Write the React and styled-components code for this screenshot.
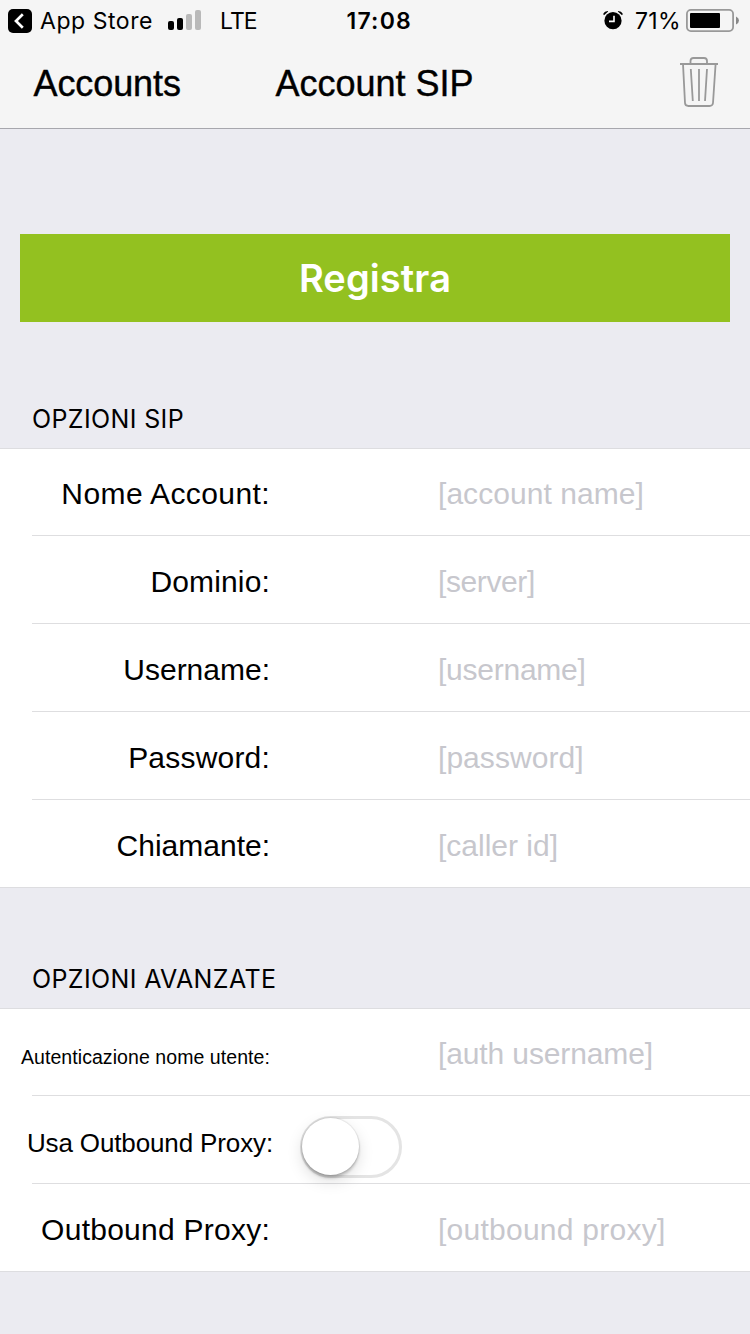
import React, { useState } from "react";
import styled, { createGlobalStyle } from "styled-components";

const GlobalStyle = createGlobalStyle`
  * {
    box-sizing: border-box;
  }

  body {
    margin: 0;
    background: #ebebf1;
    font-family: "Liberation Sans", Arial, sans-serif;
    color: #000;
  }
`;

const Screen = styled.div`
  width: 750px;
  height: 1334px;
  overflow: hidden;
  background: #ebebf1;
`;

const Header = styled.header`
  height: 129px;
  background: #f5f5f5;
  border-bottom: 1px solid #a7a7ad;
`;

const StatusBar = styled.div`
  display: flex;
  align-items: center;
  height: 40px;
  padding: 1px 11px 0 8px;
  font-family: Inter, sans-serif;
  font-size: 23px;
  line-height: 40px;

  svg {
    flex: none;
  }
`;

const StatusText = styled.span`
  width: ${props => props.width}px;
  margin-left: ${props => props.gap}px;
  font-weight: ${props => props.weight || 400};
  letter-spacing: ${props => props.spacing || 0}px;
  white-space: nowrap;
`;

const SignalIcon = styled.svg`
  margin: -2px 0 0 14px;
`;

const AlarmIcon = styled.svg`
  margin: -2px 0 0 auto;
`;

const BatteryIcon = styled.svg`
  margin-left: 6px;
`;

const NavBar = styled.nav`
  display: grid;
  grid-template-columns: 242px 1fr 40px;
  align-items: center;
  height: 88px;
  padding: 0 31px 0 33.5px;
`;

const BackButton = styled.button`
  padding: 0;
  border: 0;
  background: none;
  color: #000;
  font: 36px "Liberation Sans", Arial, sans-serif;
  letter-spacing: -0.1px;
  text-align: left;
  -webkit-text-stroke: 0.4px #000;
`;

const Title = styled.h1`
  margin: 0;
  font-size: 36px;
  font-weight: 400;
  -webkit-text-stroke: 0.4px #000;
`;

const TrashButton = styled.button`
  display: flex;
  padding: 0;
  margin-top: -5px;
  border: 0;
  background: none;
`;

const RegisterButton = styled.button`
  display: block;
  width: 710px;
  height: 88px;
  margin: 105px 20px 0;
  padding: 0;
  border: 0;
  background: #93c120;
  color: #fff;
  font: 600 38px Inter, sans-serif;
  letter-spacing: 0.1px;
`;

const SectionTitle = styled.h2`
  display: flex;
  align-items: flex-end;
  height: ${props => props.height}px;
  margin: 0;
  padding: 0 0 13px 32px;
  font: 400 25px/32px Inter, sans-serif;
  letter-spacing: 0.37px;
`;

const Group = styled.div`
  background: #fff;
  border-top: 1px solid #dddde0;
  border-bottom: 1px solid #dddde0;
`;

const Row = styled.div`
  display: flex;
  align-items: center;
  height: 88px;
  padding-top: 3px;
  background: linear-gradient(#dedee0, #dedee0) 32px 100% / 718px 1px no-repeat;

  &:first-child {
    height: 87px;
  }

  &:last-child {
    height: 87px;
    padding-top: 4px;
    background: none;
  }
`;

const Label = styled.label`
  width: ${props => props.width || 270}px;
  padding-top: ${props => props.drop || 0}px;
  font-size: ${props => props.size || 30}px;
  letter-spacing: ${props => props.spacing || 0}px;
  text-align: right;
  white-space: nowrap;
`;

const Field = styled.input`
  width: 300px;
  height: 60px;
  margin-left: 168px;
  padding: 0;
  border: 0;
  outline: 0;
  background: none;
  font: 30px "Liberation Sans", Arial, sans-serif;
  letter-spacing: ${props => props.$spacing || 0}px;

  &::placeholder {
    color: #c7c7cd;
    opacity: 1;
  }
`;

const Switch = styled.button`
  display: flex;
  align-items: center;
  justify-content: ${props => (props.$on ? "flex-end" : "flex-start")};
  width: 102px;
  height: 62px;
  margin: 11px 0 0 27px;
  padding: 0;
  border: 3px solid #e4e4e4;
  border-radius: 31px;
  background: ${props => (props.$on ? "#4cd964" : "#fff")};
`;

const Thumb = styled.span`
  width: 57px;
  height: 57px;
  margin: -1px 0 0 -1px;
  border-radius: 50%;
  background: #fff;
  box-shadow: 0 6px 16px rgba(0, 0, 0, 0.13), 0 3px 3px rgba(0, 0, 0, 0.2),
    0 0 1px 1px rgba(0, 0, 0, 0.08);
`;

const sipFields = [
  { id: "name", label: "Nome Account:", placeholder: "[account name]", labelSpacing: 0.4, spacing: 0.05 },
  { id: "domain", label: "Dominio:", placeholder: "[server]", labelSpacing: 0.15, spacing: -0.4 },
  { id: "username", label: "Username:", placeholder: "[username]", spacing: -0.25 },
  { id: "password", label: "Password:", placeholder: "[password]", labelSpacing: 0.2, spacing: 0.05 },
  { id: "caller", label: "Chiamante:", placeholder: "[caller id]" },
];

function Status() {
  return (
    <StatusBar>
      <svg width="24" height="24" viewBox="0 0 24 24">
        <rect width="24" height="24" rx="5" />
        <path d="M14.8 5.3 L8 12 L14.8 18.7" fill="none" stroke="#fff" strokeWidth="2.7" />
      </svg>
      <StatusText gap={8} width={114} spacing={0.55}>App Store</StatusText>
      <SignalIcon width="34" height="20" viewBox="0 0 34 20">
        <rect x="0" y="11" width="6" height="9" rx="2" />
        <rect x="9" y="8" width="6" height="12" rx="2" />
        <rect x="18" y="4" width="6" height="16" rx="2" fill="#b9b9b9" />
        <rect x="27" y="0" width="6" height="20" rx="2" fill="#b9b9b9" />
      </SignalIcon>
      <StatusText gap={18} width={44} spacing={-0.9}>LTE</StatusText>
      <StatusText gap={82.5} width={69.5} weight={600} spacing={1.2}>17:08</StatusText>
      <AlarmIcon width="20" height="20" viewBox="0 0 20 20">
        <circle cx="10" cy="10.7" r="8.6" />
        <path d="M0.4 4.6 V3.5 Q1.5 1 4.8 1 L5.2 1.5 L1 5.2 Z M19.6 4.6 V3.5 Q18.5 1 15.2 1 L14.8 1.5 L19 5.2 Z" />
        <path d="M11 5.8 V11.4 H6" fill="none" stroke="#fff" strokeWidth="1.6" />
      </AlarmIcon>
      <StatusText gap={12} width={45} spacing={0.3}>71%</StatusText>
      <BatteryIcon width="53" height="24" viewBox="0 0 53 24">
        <rect x="0.9" y="0.9" width="46.2" height="21.2" rx="4" fill="none" stroke="#999" strokeWidth="1.8" />
        <rect x="4" y="4" width="30" height="15" rx="1" />
        <path d="M50 7.5 Q53 9 53 11.5 Q53 14 50 15.5 Z" fill="#888" />
      </BatteryIcon>
    </StatusBar>
  );
}

function TrashIcon() {
  return (
    <svg width="40" height="52" viewBox="0 0 40 52" fill="none" stroke="#999" strokeWidth="1.8">
      <path d="M1 8 H39" />
      <path d="M11.5 8 V5 Q11.5 2 14.5 2 H25 Q28 2 28 5 V8" />
      <path d="M4 8 L6 47 Q6.2 50 9.5 50 H30.5 Q33.6 50 34 47 L36.6 8" />
      <path d="M11.8 13 L13.8 45 M20 13 V45 M28 13 L26 45" />
    </svg>
  );
}

function App() {
  const [useProxy, setUseProxy] = useState(false);

  return (
    <>
      <GlobalStyle />
      <Screen>
        <Header>
          <Status />
          <NavBar>
            <BackButton>Accounts</BackButton>
            <Title>Account SIP</Title>
            <TrashButton aria-label="Elimina">
              <TrashIcon />
            </TrashButton>
          </NavBar>
        </Header>

        <RegisterButton>Registra</RegisterButton>

        <SectionTitle height={126}>OPZIONI SIP</SectionTitle>
        <Group>
          {sipFields.map((field) => (
            <Row key={field.id}>
              <Label htmlFor={field.id} spacing={field.labelSpacing}>{field.label}</Label>
              <Field id={field.id} placeholder={field.placeholder} $spacing={field.spacing} />
            </Row>
          ))}
        </Group>

        <SectionTitle height={120}>OPZIONI AVANZATE</SectionTitle>
        <Group>
          <Row>
            <Label htmlFor="auth" size={19.5} spacing={0.07} drop={7}>Autenticazione nome utente:</Label>
            <Field id="auth" placeholder="[auth username]" $spacing={-0.12} />
          </Row>
          <Row>
            <Label size={26} width={273} spacing={-0.13} drop={3}>Usa Outbound Proxy:</Label>
            <Switch $on={useProxy} onClick={() => setUseProxy(!useProxy)}>
              <Thumb />
            </Switch>
          </Row>
          <Row>
            <Label htmlFor="proxy" spacing={0.25}>Outbound Proxy:</Label>
            <Field id="proxy" placeholder="[outbound proxy]" $spacing={0.25} />
          </Row>
        </Group>
      </Screen>
    </>
  );
}

export default App;
